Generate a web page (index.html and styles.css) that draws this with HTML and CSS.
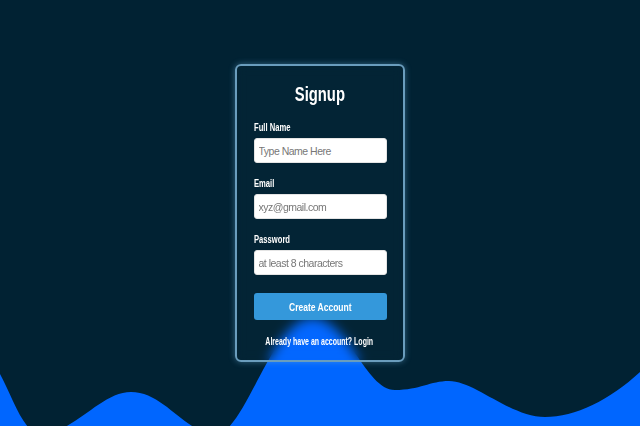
FILE: index.html
```html
<!DOCTYPE html>
<html lang="en">
<head>
<meta charset="utf-8">
<title>Signup</title>
<link rel="stylesheet" href="styles.css">
</head>
<body>
<svg class="wave" viewBox="0 0 640 426" preserveAspectRatio="none" aria-hidden="true">
  <path d="M0,374 C12,396 24,434 40,434 C74,434 100,392 131,392 C165,392 185,434 216,434 C245,434 272,318 312,318 C348,318 365,390 395,390 C420,390 430,381 449,381 C475,381 510,417 545,417 C575,417 610,400 640,372 L640,426 L0,426 Z" fill="#0066ff"/>
</svg>
<main class="stage">
  <form class="card">
    <h1 class="title"><span class="txt">Signup</span></h1>
    <label class="label" for="name"><span class="txt">Full Name</span></label>
    <input class="field" id="name" type="text" placeholder="Type Name Here">
    <label class="label" for="email"><span class="txt">Email</span></label>
    <input class="field" id="email" type="email" placeholder="xyz@gmail.com">
    <label class="label" for="pass"><span class="txt">Password</span></label>
    <input class="field" id="pass" type="password" placeholder="at least 8 characters">
    <button class="submit" type="button"><span class="txt">Create Account</span></button>
    <p class="foot"><span class="txt">Already have an account? Login</span></p>
  </form>
</main>
</body>
</html>
```
FILE: styles.css
```css
html, body {
  margin: 0;
  padding: 0;
  width: 640px;
  height: 426px;
  overflow: hidden;
  background: #012233;
  font-family: "Liberation Sans", Arial, sans-serif;
}
.wave {
  position: absolute;
  left: 0;
  top: 0;
  width: 640px;
  height: 426px;
  z-index: 0;
}
.stage {
  position: relative;
  z-index: 1;
  height: 426px;
  display: flex;
  align-items: center;
  justify-content: center;
}
.card {
  box-sizing: border-box;
  width: 170px;
  height: 298px;
  margin-right: 1px;
  padding: 16px 17px 0 17px;
  border: 2px solid #6a9dbd;
  border-radius: 6px;
  background: rgba(255, 255, 255, 0.01);
  backdrop-filter: blur(6px);
  -webkit-backdrop-filter: blur(6px);
  box-shadow: 0 0 6px rgba(110, 180, 225, 0.45);
  display: flex;
  flex-direction: column;
  color: #fff;
}
.txt {
  display: inline-block;
  white-space: nowrap;
  transform: scaleX(0.74);
  transform-origin: left center;
}
.title {
  margin: 0 0 16px 0;
  font-size: 20px;
  line-height: 24px;
  font-weight: bold;
  display: flex;
  justify-content: center;
}
.title .txt,
.submit .txt,
.foot .txt {
  transform-origin: center center;
}
.label {
  font-size: 10.3px;
  line-height: 12px;
  font-weight: bold;
  margin-bottom: 4px;
}
.field {
  box-sizing: border-box;
  width: 133px;
  height: 25px;
  margin: 0 0 15px 0;
  padding: 0 4px;
  border: 1px solid #e4e4e4;
  border-radius: 3px;
  background: #fff;
  font-family: "Liberation Sans", Arial, sans-serif;
  font-size: 10.5px;
  letter-spacing: -0.5px;
  color: #222;
  outline: none;
}
.field::placeholder {
  color: #777;
}
.submit {
  margin-top: 3px;
  width: 133px;
  height: 27px;
  border: none;
  border-radius: 3px;
  background: #3498db;
  color: #fff;
  font-family: "Liberation Sans", Arial, sans-serif;
  font-size: 11.5px;
  font-weight: bold;
  padding: 0;
  display: flex;
  align-items: center;
  justify-content: center;
}
.foot {
  margin: 16px 0 0 0;
  font-size: 10.3px;
  line-height: 12px;
  font-weight: bold;
  display: flex;
  justify-content: center;
}
.foot .txt {
  transform: scaleX(0.68);
}
```
